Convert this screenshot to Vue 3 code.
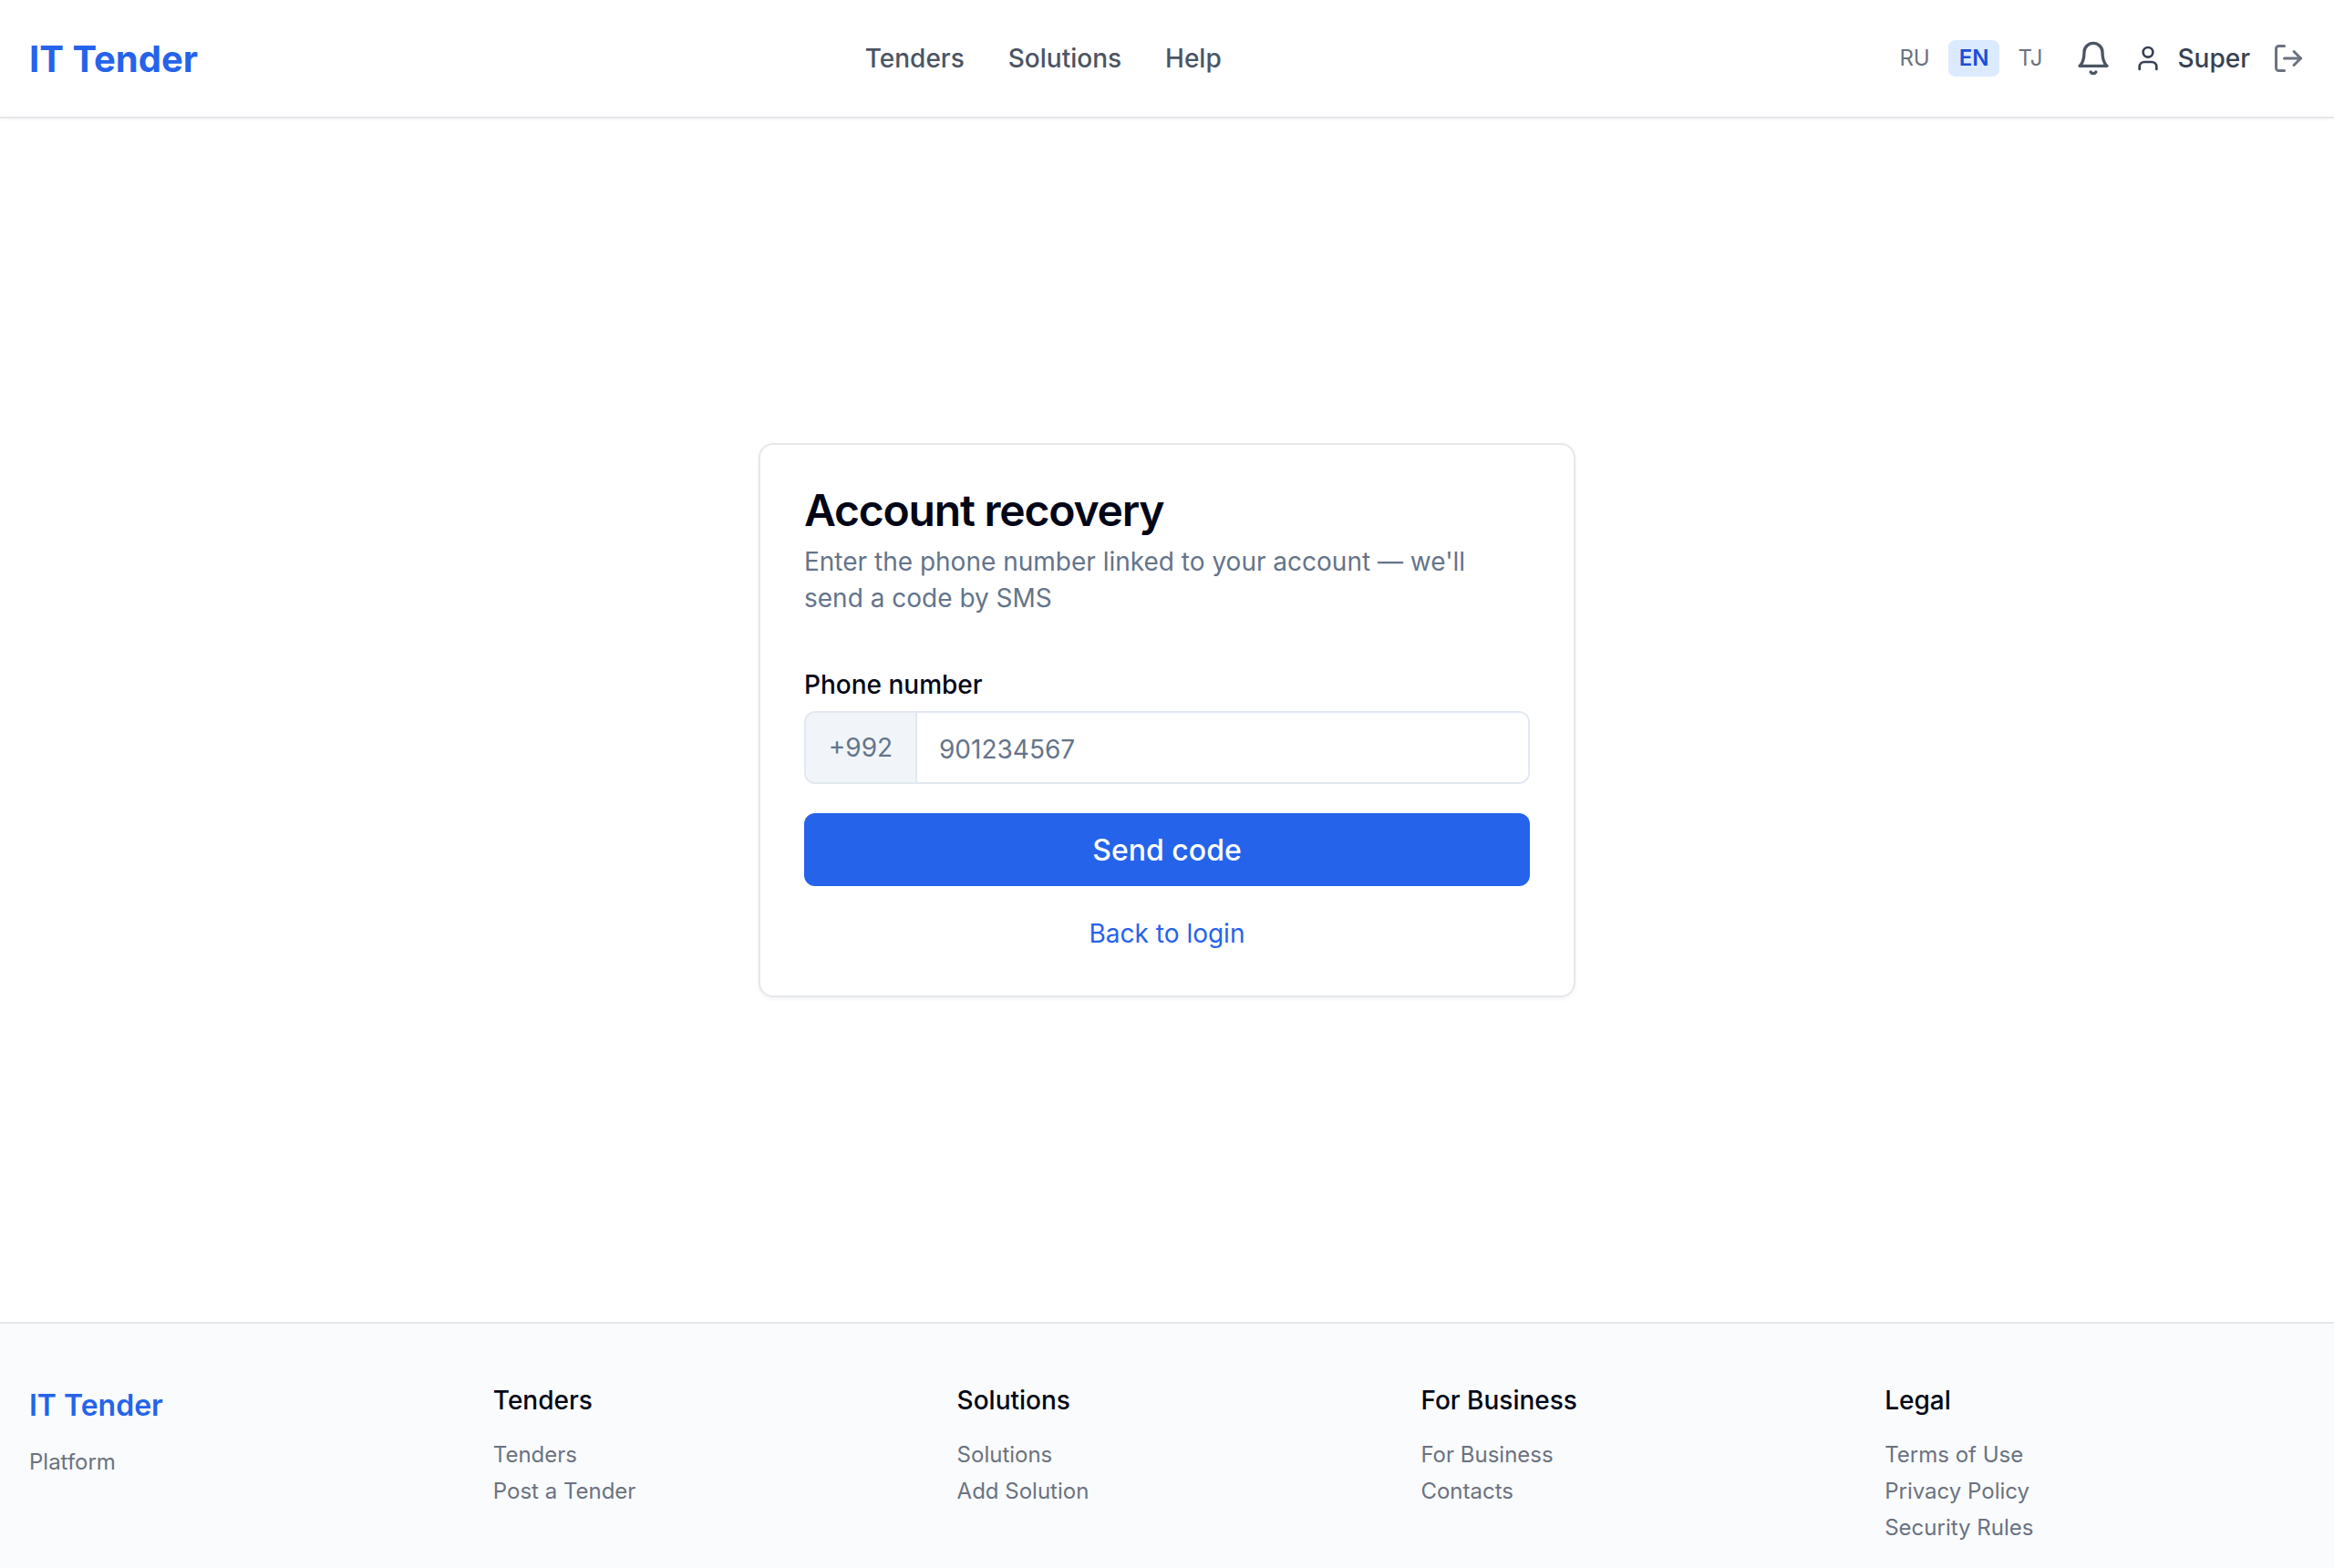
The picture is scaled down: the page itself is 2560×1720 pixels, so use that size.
<script setup>
const footerCols = [
  { title: 'Tenders', links: ['Tenders', 'Post a Tender'] },
  { title: 'Solutions', links: ['Solutions', 'Add Solution'] },
  { title: 'For Business', links: ['For Business', 'Contacts'] },
  { title: 'Legal', links: ['Terms of Use', 'Privacy Policy', 'Security Rules'] },
]
</script>

<template>
  <div class="page">
    <header class="header">
      <a class="logo">IT Tender</a>
      <nav class="nav">
        <a>Tenders</a>
        <a>Solutions</a>
        <a>Help</a>
      </nav>
      <div class="actions">
        <div class="langs">
          <span class="lang">RU</span>
          <span class="lang active">EN</span>
          <span class="lang">TJ</span>
        </div>
        <svg class="bell" viewBox="0 0 24 24" fill="none" stroke="currentColor" stroke-width="2" stroke-linecap="round" stroke-linejoin="round">
          <path d="M6 8a6 6 0 0 1 12 0c0 7 3 9 3 9H3s3-2 3-9" />
          <path d="M10.3 21a1.94 1.94 0 0 0 3.4 0" />
        </svg>
        <div class="user">
          <svg class="user-icon" viewBox="0 0 24 24" fill="none" stroke="currentColor" stroke-width="2" stroke-linecap="round" stroke-linejoin="round">
            <path d="M19 21v-2a4 4 0 0 0-4-4H9a4 4 0 0 0-4 4v2" />
            <circle cx="12" cy="7" r="4" />
          </svg>
          <span>Super</span>
        </div>
        <svg class="logout" viewBox="0 0 24 24" fill="none" stroke="currentColor" stroke-width="2" stroke-linecap="round" stroke-linejoin="round">
          <path d="M9 21H5a2 2 0 0 1-2-2V5a2 2 0 0 1 2-2h4" />
          <path d="m16 17 5-5-5-5" />
          <path d="M21 12H9" />
        </svg>
      </div>
    </header>

    <main class="main">
      <section class="card">
        <h1 class="title">Account recovery</h1>
        <p class="sub">Enter the phone number linked to your account — we'll send a code by SMS</p>
        <label class="label" for="phone">Phone number</label>
        <div class="field">
          <span class="prefix">+992</span>
          <input id="phone" class="input" type="tel" placeholder="901234567" />
        </div>
        <button class="send">Send code</button>
        <a class="back">Back to login</a>
      </section>
    </main>

    <footer class="footer">
      <div class="brand">
        <div class="foot-logo">IT Tender</div>
        <div class="platform">Platform</div>
      </div>
      <div v-for="col in footerCols" :key="col.title" class="col">
        <div class="col-title">{{ col.title }}</div>
        <a v-for="l in col.links" :key="l" class="col-link">{{ l }}</a>
      </div>
    </footer>
  </div>
</template>

<style scoped>
.page {
  height: 1720px;
  display: flex;
  flex-direction: column;
  background: #fff;
  font-family: Inter, "Noto Sans", sans-serif;
  overflow: hidden;
}
.header {
  height: 130px;
  flex: none;
  box-sizing: border-box;
  padding: 0 32px;
  display: flex;
  justify-content: space-between;
  align-items: center;
  border-bottom: 2px solid #e5e7eb;
  box-shadow: 0 2px 4px rgba(0, 0, 0, 0.03);
}
.logo {
  font-size: 40px;
  font-weight: 700;
  color: #2563eb;
}
.nav {
  display: flex;
  gap: 48px;
  font-size: 28px;
  font-weight: 500;
  color: #4b5563;
}
.actions {
  display: flex;
  align-items: center;
  color: #374151;
}
.langs {
  display: flex;
  gap: 8px;
  margin-right: 24px;
}
.lang {
  font-size: 24px;
  font-weight: 400;
  line-height: 40px;
  padding: 0 12px;
  border-radius: 8px;
  color: #6b7280;
}
.lang.active {
  background: #dbeafe;
  color: #1d4ed8;
  font-weight: 600;
}
.bell {
  width: 40px;
  height: 40px;
  color: #4b5563;
  margin-right: 24px;
}
.user {
  display: flex;
  align-items: center;
  gap: 16px;
  font-size: 28px;
  font-weight: 500;
}
.user-icon {
  width: 32px;
  height: 32px;
}
.logout {
  width: 36px;
  height: 36px;
  margin-left: 24px;
  color: #6b7280;
}
.main {
  flex: 1;
  display: flex;
  align-items: center;
  justify-content: center;
}
.card {
  width: 896px;
  box-sizing: border-box;
  padding: 48px;
  border: 2px solid #e5e7eb;
  border-radius: 16px;
  box-shadow: 0 2px 4px rgba(0, 0, 0, 0.05);
  display: flex;
  flex-direction: column;
}
.title {
  margin: 0;
  font-size: 48px;
  line-height: 48px;
  font-weight: 600;
  letter-spacing: -0.025em;
  color: #020617;
}
.sub {
  margin: 12px 0 0;
  font-size: 28px;
  line-height: 40px;
  color: #64748b;
}
.label {
  margin-top: 55px;
  font-size: 28px;
  line-height: 40px;
  font-weight: 500;
  color: #020617;
}
.field {
  margin-top: 9px;
  height: 80px;
  box-sizing: border-box;
  display: flex;
  border: 2px solid #e2e8f0;
  border-radius: 12px;
  overflow: hidden;
}
.prefix {
  width: 122px;
  flex: none;
  box-sizing: border-box;
  display: flex;
  align-items: center;
  justify-content: center;
  background: #f1f5f9;
  border-right: 2px solid #e2e8f0;
  font-size: 28px;
  color: #64748b;
}
.input {
  flex: 1;
  min-width: 0;
  border: none;
  outline: none;
  padding: 4px 24px 0;
  font-family: inherit;
  font-size: 28px;
  color: #020617;
  background: #fff;
}
.input::placeholder {
  color: #64748b;
  opacity: 1;
}
.send {
  margin-top: 32px;
  height: 80px;
  border: none;
  border-radius: 12px;
  background: #2563eb;
  color: #fff;
  font-family: inherit;
  font-size: 32px;
  font-weight: 500;
}
.back {
  margin-top: 32px;
  text-align: center;
  font-size: 28px;
  line-height: 40px;
  color: #2563eb;
}
.footer {
  height: 270px;
  flex: none;
  box-sizing: border-box;
  padding: 64px 32px 0;
  display: grid;
  grid-template-columns: repeat(5, 1fr);
  gap: 48px;
  background: #f9fbfd;
  border-top: 2px solid #e5e7eb;
}
.foot-logo {
  font-size: 32px;
  line-height: 52px;
  font-weight: 600;
  color: #2563eb;
}
.platform {
  margin-top: 16px;
  font-size: 24px;
  line-height: 40px;
  color: #6b7280;
}
.col {
  display: flex;
  flex-direction: column;
}
.col-title {
  font-size: 28px;
  line-height: 40px;
  font-weight: 500;
  color: #020617;
  margin-bottom: 20px;
}
.col-link {
  font-size: 24px;
  line-height: 40px;
  color: #6b7280;
}
</style>
